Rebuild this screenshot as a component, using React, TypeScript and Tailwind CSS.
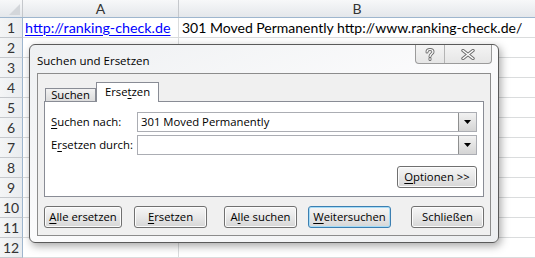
import React from 'react';

const ROWS = [1, 2, 3, 4, 5, 6, 7, 8, 9, 10, 11, 12];

function Key({ children }: { children: React.ReactNode }) {
  return <span className="underline underline-offset-2 decoration-1">{children}</span>;
}

function Btn({ children, w, primary }: { children: React.ReactNode; w: string; primary?: boolean }) {
  return (
    <div
      className={`${w} h-[22px] flex items-center justify-center whitespace-nowrap rounded-[3px] border text-black bg-gradient-to-b from-[#f6f6f6] via-[#e8e8e8] to-[#d6d6d6] ${
        primary ? 'border-[#3c7fb1] shadow-[inset_0_0_0_1px_#a6dcf7]' : 'border-[#707070] shadow-[inset_0_0_0_1px_#fcfcfc]'
      }`}
    >
      {children}
    </div>
  );
}

function Combo({ value }: { value?: string }) {
  return (
    <div className="flex-1 h-[20px] flex bg-white border border-[#abadb3]">
      <div className="flex-1 flex items-center pl-[3px] text-black whitespace-nowrap">{value}</div>
      <div className="w-[18px] h-full flex items-center justify-center border-l border-[#8e8f8f] bg-gradient-to-b from-[#f2f2f2] to-[#d4d4d4]">
        <svg width="7" height="4" viewBox="0 0 7 4">
          <path d="M0 0h7L3.5 4z" fill="#000" />
        </svg>
      </div>
    </div>
  );
}

export default function App() {
  return (
    <div className="relative w-[535px] h-[258px] overflow-hidden bg-white" style={{ fontFamily: '"Open Sans", "Liberation Sans", sans-serif' }}>
      {/* sheet */}
      <div className="flex flex-col" style={{ fontFamily: 'Lato, sans-serif' }}>
        <div className="flex h-[18px] bg-gradient-to-b from-[#f7f8f9] to-[#e4e7eb] border-b border-[#9eb6ce]">
          <div className="w-[23px] border-r border-[#c5c8cc] relative">
            <svg className="absolute right-[2px] bottom-[2px]" width="11" height="11" viewBox="0 0 11 11">
              <path d="M11 0v11H0z" fill="#d3d6da" />
            </svg>
          </div>
          <div className="w-[156px] border-r border-[#c5c8cc] flex items-center justify-center text-[14px] text-[#333]">A</div>
          <div className="flex-1 flex items-center justify-center text-[14px] text-[#333]">B</div>
        </div>
        {ROWS.map((r) => (
          <div key={r} className="flex h-[20px] border-b border-[#dadcdd]">
            <div className="w-[23px] -mb-px bg-gradient-to-r from-[#f4f5f6] to-[#e9ecef] border-r border-[#9eb6ce] border-b border-b-[#c5c8cc] flex items-center justify-center text-[14px] text-[#333]">
              {r}
            </div>
            <div className="w-[156px] border-r border-[#dadcdd] flex items-center pl-[2px] text-[14.3px] whitespace-nowrap overflow-hidden">
              {r === 1 && <span className="text-[#0000ff] underline decoration-1 underline-offset-2">http://ranking-check.de</span>}
            </div>
            <div className="flex-1 flex items-center pl-[3px] text-[14px] text-black whitespace-nowrap">
              {r === 1 && '301 Moved Permanently http://www.ranking-check.de/'}
            </div>
          </div>
        ))}
      </div>

      {/* dialog */}
      <div className="absolute left-[29px] top-[44px] w-[470px] h-[199px] rounded-[6px] border border-[#5a5a5a] bg-gradient-to-br from-[#eef0f2] via-[#fbfbfc] to-[#eceef0] shadow-[2px_3px_8px_rgba(0,0,0,0.35)] flex flex-col px-[7px] pb-[6px] text-[11.3px]">
        <div className="h-[28px] flex items-start justify-between">
          <div className="pt-[7px] text-[11.5px] text-black">Suchen und Ersetzen</div>
          <div className="flex h-[19px] border border-t-0 border-[#9b9b9b] rounded-b-[4px] bg-gradient-to-b from-[#f4f4f4] to-[#e6e6e6] -mr-px">
            <div className="w-[29px] flex items-center justify-center border-r border-[#b4b4b4]">
              <svg width="10" height="13" viewBox="0 0 10 13">
                <path d="M2 4C2 2 3.5 1.5 5 1.5S8 2.3 8 4 5 6 5 8.5M5 10.5v1" fill="none" stroke="#6d6d6d" strokeWidth="3" strokeLinecap="round" />
                <path d="M2 4C2 2 3.5 1.5 5 1.5S8 2.3 8 4 5 6 5 8.5M5 10.5v1" fill="none" stroke="#fff" strokeWidth="1.2" strokeLinecap="round" />
              </svg>
            </div>
            <div className="w-[46px] flex items-center justify-center">
              <svg width="14" height="11" viewBox="0 0 14 11">
                <path d="M2 1.5l10 8M12 1.5l-10 8" fill="none" stroke="#6d6d6d" strokeWidth="3.4" strokeLinecap="round" />
                <path d="M2 1.5l10 8M12 1.5l-10 8" fill="none" stroke="#fff" strokeWidth="1.4" strokeLinecap="round" />
              </svg>
            </div>
          </div>
        </div>
        <div className="flex-1 border border-[#8c8c8c] bg-[#f0f0f0] flex flex-col px-[6px] pt-[7px] pb-[7px]">
          <div className="flex items-end h-[20px]">
            <div className="w-[51px] h-[13px] ml-px border border-b-0 border-[#898c95] bg-gradient-to-b from-[#f2f2f2] to-[#dcdcdc] flex items-end justify-center leading-[12px]">
              <span>Suche<Key>n</Key></span>
            </div>
            <div className="w-[63px] h-[20px] -mb-px border border-b-0 border-[#898c95] bg-white flex items-center justify-center z-10">
              <span>Erse<Key>t</Key>zen</span>
            </div>
          </div>
          <div className="h-[96px] border border-[#898c95] bg-white flex flex-col px-[6px] pt-[10px]">
            <div className="flex items-center gap-[6px]">
              <div className="w-[80px] whitespace-nowrap"><Key>S</Key>uchen nach:</div>
              <Combo value="301 Moved Permanently" />
            </div>
            <div className="flex items-center gap-[6px] mt-[3px]">
              <div className="w-[80px] whitespace-nowrap">E<Key>r</Key>setzen durch:</div>
              <Combo />
            </div>
            <div className="flex justify-end mt-[11px]">
              <Btn w="w-[80px]"><span><Key>O</Key>ptionen &gt;&gt;</span></Btn>
            </div>
          </div>
          <div className="flex-1" />
          <div className="flex items-end justify-between">
            <div className="flex gap-[12px]">
              <Btn w="w-[78px]"><span><Key>A</Key>lle ersetzen</span></Btn>
              <Btn w="w-[73px]"><span><Key>E</Key>rsetzen</span></Btn>
            </div>
            <div className="flex gap-[11px]">
              <Btn w="w-[73px]"><span>A<Key>l</Key>le suchen</span></Btn>
              <Btn w="w-[83px]" primary><span><Key>W</Key>eitersuchen</span></Btn>
              <div className="ml-[9px]">
                <Btn w="w-[73px]"><span>Schließen</span></Btn>
              </div>
            </div>
          </div>
        </div>
      </div>
    </div>
  );
}
